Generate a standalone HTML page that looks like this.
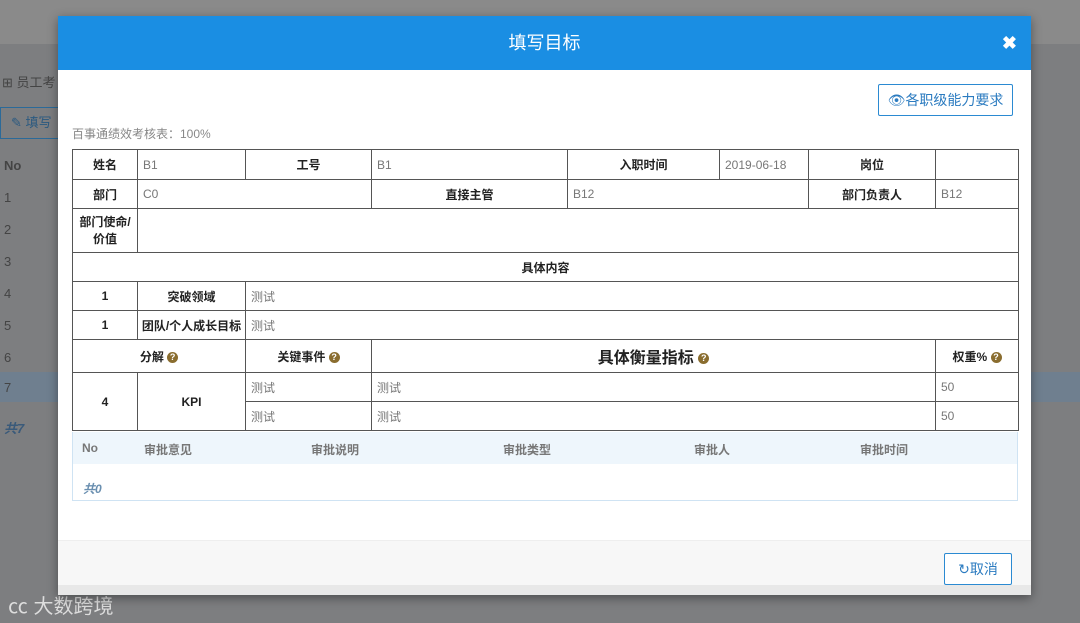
<!DOCTYPE html>
<html><head><meta charset="utf-8"><style>
*{margin:0;padding:0;box-sizing:border-box}
body{width:1080px;height:623px;overflow:hidden;background:#7d7e80;font-family:"Liberation Sans","Noto Sans CJK SC",sans-serif;position:relative}
.abs{position:absolute}
.bgtop{left:0;top:0;width:1080px;height:44px;background:#8a8a8a}
.bgt{color:#444;font-size:13px}
.modal{left:58px;top:16px;width:973px;height:579px;background:#fff;box-shadow:0 3px 10px rgba(0,0,0,.4)}
.hd{height:54px;background:#1a8ee3;color:#fff;font-size:18px;text-align:center;line-height:54px}
.x{position:absolute;right:14px;top:0;font-size:18px;font-weight:bold;color:#fff}
table{border-collapse:collapse;table-layout:fixed;position:absolute;left:72px;top:149px;width:946px;font-size:12px}
td{border:1px solid #555;padding:0 5px;color:#777;height:29px}
td.b{font-weight:bold;color:#222;text-align:center}
.q{display:inline-block;width:11px;height:11px;border-radius:50%;background:#8a6d2f;color:#fff;font-size:9px;line-height:11px;text-align:center;vertical-align:middle;font-weight:bold}
.btn{border:1px solid #2b8ad2;color:#2b7bc0;font-size:14px;text-align:center;background:#fff;border-radius:2px}
</style></head><body>
<div class="abs bgtop"></div>
<div class="abs bgt" style="left:2px;top:72px">⊞ 员工考</div>
<div class="abs" style="left:0;top:107px;width:60px;height:32px;border:1px solid #2b6a99;color:#2b5a80;font-size:13px;line-height:30px;padding-left:10px">✎ 填写</div>
<div class="abs bgt" style="left:4px;top:158px;font-weight:bold">No</div>
<div class="abs bgt" style="left:4px;top:190px">1</div>
<div class="abs bgt" style="left:4px;top:222px">2</div>
<div class="abs bgt" style="left:4px;top:254px">3</div>
<div class="abs bgt" style="left:4px;top:286px">4</div>
<div class="abs bgt" style="left:4px;top:318px">5</div>
<div class="abs bgt" style="left:4px;top:350px">6</div>
<div class="abs" style="left:0;top:372px;width:1080px;height:30px;background:#6f7f8f"></div>
<div class="abs bgt" style="left:4px;top:380px">7</div>
<div class="abs bgt" style="left:4px;top:418px;font-style:italic;font-weight:bold;color:#3a5a7a">共7</div>
<div class="abs" style="left:8px;top:590px;color:#ddd;font-size:20px">㏄ 大数跨境</div>
<div class="abs modal">
<div class="hd">填写目标<span class="x">✖</span></div>
<div style="position:absolute;left:0;top:524px;width:973px;height:46px;background:#f7f7f7;border-top:1px solid #eee"></div>
<div style="position:absolute;left:0;top:569px;width:973px;height:10px;background:#e8e8e8"></div>
</div>
<div class="abs btn" style="left:878px;top:84px;width:135px;height:32px;line-height:30px">👁各职级能力要求</div>
<div class="abs" style="left:72px;top:125px;font-size:12px;color:#888">百事通绩效考核表：100%</div>
<table>
<colgroup><col style="width:65px"><col style="width:108px"><col style="width:126px"><col style="width:196px"><col style="width:152px"><col style="width:89px"><col style="width:127px"><col style="width:83px"></colgroup>
<tr style="height:30px"><td class="b">姓名</td><td>B1</td><td class="b">工号</td><td>B1</td><td class="b">入职时间</td><td>2019-06-18</td><td class="b">岗位</td><td></td></tr>
<tr><td class="b">部门</td><td colspan="2">C0</td><td class="b">直接主管</td><td colspan="2">B12</td><td class="b">部门负责人</td><td>B12</td></tr>
<tr style="height:44px"><td class="b" style="padding:0 2px;line-height:17px">部门使命/价值</td><td colspan="7"></td></tr>
<tr><td class="b" colspan="8">具体内容</td></tr>
<tr><td class="b">1</td><td class="b">突破领域</td><td colspan="6">测试</td></tr>
<tr><td class="b">1</td><td class="b" style="padding:0 2px">团队/个人成长目标</td><td colspan="6">测试</td></tr>
<tr style="height:33px"><td class="b" colspan="2">分解 <span class="q">?</span></td><td class="b">关键事件 <span class="q">?</span></td><td class="b" colspan="4" style="font-size:16px">具体衡量指标 <span class="q">?</span></td><td class="b">权重% <span class="q">?</span></td></tr>
<tr><td class="b" rowspan="2">4</td><td class="b" rowspan="2">KPI</td><td>测试</td><td colspan="4">测试</td><td>50</td></tr>
<tr><td>测试</td><td colspan="4">测试</td><td>50</td></tr>
</table>
<div class="abs" style="left:72px;top:432px;width:946px;height:69px;border:1px solid #cfe3f3;border-top:none">
<div style="height:32px;background:#eef6fc;font-size:12px;color:#777;font-weight:bold;position:relative">
<span class="abs" style="left:9px;top:9px">No</span><span class="abs" style="left:71px;top:9px">审批意见</span><span class="abs" style="left:238px;top:9px">审批说明</span><span class="abs" style="left:430px;top:9px">审批类型</span><span class="abs" style="left:621px;top:9px">审批人</span><span class="abs" style="left:787px;top:9px">审批时间</span></div>
<span class="abs" style="left:10px;top:48px;font-size:12px;font-style:italic;font-weight:bold;color:#6a8fb0">共0</span>
</div>
<div class="abs btn" style="left:944px;top:553px;width:68px;height:32px;line-height:30px">↻取消</div>
</body></html>
